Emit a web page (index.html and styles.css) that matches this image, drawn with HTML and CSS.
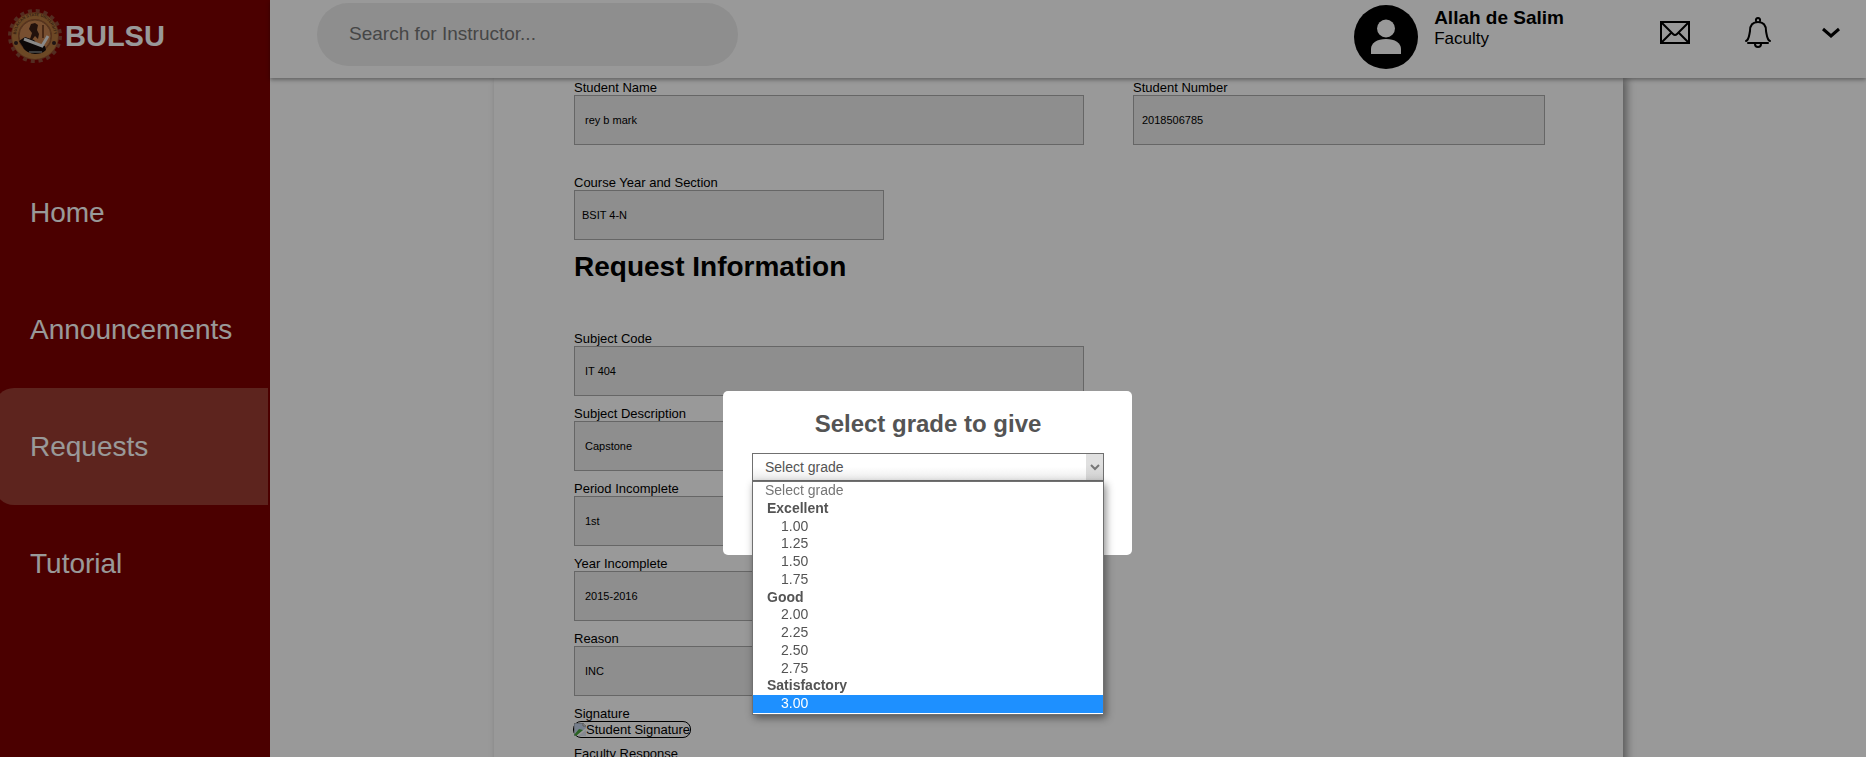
FILE: index.html
```html
<!DOCTYPE html>
<html lang="en">
<head>
<meta charset="utf-8">
<title>BULSU - Requests</title>
<link rel="stylesheet" href="styles.css">
</head>
<body>
<div class="app">
  <aside class="sidebar">
    <a class="brand" href="#">
      <svg class="brand-logo" viewBox="0 0 56 56" aria-hidden="true">
        <circle cx="28" cy="28" r="25" fill="none" stroke="#8a4a38" stroke-width="4" stroke-dasharray="4 3.854"/>
        <circle cx="28" cy="28" r="24" fill="#93502f"/>
        <circle cx="28" cy="28" r="20" fill="none" stroke="#b5793f" stroke-width="6"/>
        <path id="seal-arc" d="M10 33a19 19 0 1 1 36 0" fill="none"/>
        <text class="seal-text" text-anchor="middle"><textPath href="#seal-arc" startOffset="50%">BULACAN STATE UNIVERSITY</textPath></text>
        <circle cx="28" cy="28" r="16" fill="#c98450" stroke="#8a5a33"/>
        <path d="M24 16l4-1 3 2-1 5 2 4-1 5-3-3-3 4-2-1 2-6-3-4z" fill="#3a1d14"/>
        <path d="M36 17v13" stroke="#7a4526" stroke-width="2"/>
        <path d="M12 33l6-4 9 3 4 5 7 1 1 4c-3 3-7 4-11 4s-11-3-12-7z" fill="#140c0c"/>
        <path d="M22 44h13" stroke="#666" stroke-width="2"/>
        <path d="M17 31l18 7 6-10" fill="none" stroke="#e4e4e4" stroke-width="3"/>
        <circle cx="9" cy="35" r="2" fill="#332222"/><circle cx="47" cy="35" r="2" fill="#332222"/>
      </svg>
      <span>BULSU</span>
    </a>
    <nav class="nav">
      <a class="nav-link" href="#">Home</a>
      <a class="nav-link" href="#">Announcements</a>
      <a class="nav-link is-active" href="#" aria-current="page">Requests</a>
      <a class="nav-link" href="#">Tutorial</a>
    </nav>
  </aside>

  <div class="main">
    <header class="topbar">
      <input class="search" type="text" placeholder="Search for Instructor..." aria-label="Search for Instructor">
      <div class="user">
        <svg class="avatar" viewBox="0 0 64 64" aria-hidden="true">
          <circle cx="32" cy="32" r="32" fill="#000"/>
          <circle cx="32" cy="23.500" r="9" fill="#fff"/>
          <path d="M17 49v-5c0-6 6-10 15-10s15 4 15 10v5z" fill="#fff"/>
        </svg>
        <div class="user-text">
          <strong class="user-name">Allah de Salim</strong>
          <span class="user-role">Faculty</span>
        </div>
      </div>
      <div class="actions">
        <button class="icon-button" type="button" aria-label="Messages">
          <svg width="30" height="24" viewBox="0 0 30 24" fill="none" stroke="#000" stroke-width="2"><path d="M1 1h28v21H1zM1 1l12 12q2 2 4 0L29 1M1 22l10-10M29 22L19 12"/></svg>
        </button>
        <button class="icon-button" type="button" aria-label="Notifications">
          <svg width="28" height="32" viewBox="0 0 28 32" fill="none" stroke="#000" stroke-width="2" stroke-linecap="round"><path d="M2 24c3-1 3-5 4-10 0-6 3-9 8-9s8 3 8 9c1 5 1 9 4 10M4 26h20M11 27c0 4 6 4 6 0M12 4c-1-4 5-4 4 0"/></svg>
        </button>
        <button class="icon-button" type="button" aria-label="Account menu">
          <svg width="18" height="12" viewBox="0 0 18 12" fill="none" stroke="#000" stroke-width="3"><path d="M1 2l8 7 8-7"/></svg>
        </button>
      </div>
    </header>

    <main class="sheet">
      <form class="form">
        <div class="field-row">
          <div class="field field-wide">
            <label for="name">Student Name</label>
            <input id="name" type="text" value="rey b mark" readonly>
          </div>
          <div class="field field-number">
            <label for="number">Student Number</label>
            <input id="number" class="input-snug" type="text" value="2018506785" readonly>
          </div>
        </div>
        <div class="field field-course">
          <label for="course">Course Year and Section</label>
          <input id="course" class="input-tight" type="text" value="BSIT 4-N" readonly>
        </div>
        <h2 class="form-title">Request Information</h2>
        <div class="field-stack">
          <div class="field field-wide">
            <label for="code">Subject Code</label>
            <input id="code" type="text" value="IT 404" readonly>
          </div>
          <div class="field field-wide">
            <label for="description">Subject Description</label>
            <input id="description" type="text" value="Capstone" readonly>
          </div>
          <div class="field field-wide">
            <label for="period">Period Incomplete</label>
            <input id="period" type="text" value="1st" readonly>
          </div>
          <div class="field field-wide">
            <label for="year">Year Incomplete</label>
            <input id="year" type="text" value="2015-2016" readonly>
          </div>
          <div class="field field-wide">
            <label for="reason">Reason</label>
            <input id="reason" type="text" value="INC" readonly>
          </div>
          <div class="field">
            <span>Signature</span>
            <div class="signature">
              <svg width="12" height="14" viewBox="0 0 12 14" aria-hidden="true"><path d="M0 0h9l3 3v2L1 13H0z" fill="#c3d3ea"/><path d="M0 0h9l3 3M0 0v13" fill="none" stroke="#8b8b8b"/><path d="M0 12l5-6 4 1-7 6z" fill="#4aa53c"/><path d="M12 7v6H4z" fill="#dfe6f2"/><path d="M9 0v3h3" fill="#fff" stroke="#8b8b8b"/></svg>
              <span>Student Signature</span>
            </div>
            <span>Faculty Response</span>
          </div>
        </div>
      </form>
    </main>
  </div>
</div>

<div class="overlay">
  <section class="dialog" role="dialog" aria-modal="true" aria-labelledby="dialog-title">
    <h2 class="dialog-title" id="dialog-title">Select grade to give</h2>
    <div class="select">
      <select class="select-box" aria-label="Grade">
        <option>Select grade</option>
      </select>
      <span class="select-arrow">
        <svg width="10" height="7" viewBox="0 0 10 7" fill="none" stroke="#777" stroke-width="2"><path d="M1 1l4 4 4-4"/></svg>
      </span>
      <ul class="options" role="listbox" aria-label="Grades">
        <li class="option option-placeholder" role="option">Select grade</li>
        <li class="option option-group" role="presentation">Excellent</li>
        <li class="option option-grade" role="option">1.00</li>
        <li class="option option-grade" role="option">1.25</li>
        <li class="option option-grade" role="option">1.50</li>
        <li class="option option-grade" role="option">1.75</li>
        <li class="option option-group" role="presentation">Good</li>
        <li class="option option-grade" role="option">2.00</li>
        <li class="option option-grade" role="option">2.25</li>
        <li class="option option-grade" role="option">2.50</li>
        <li class="option option-grade" role="option">2.75</li>
        <li class="option option-group" role="presentation">Satisfactory</li>
        <li class="option option-grade is-selected" role="option" aria-selected="true">3.00</li>
      </ul>
    </div>
  </section>
</div>
</body>
</html>
```

FILE: styles.css
```css
* {
  box-sizing: border-box;
}

body {
  margin: 0;
  font-family: "Liberation Sans", Arial, sans-serif;
  color: #000;
  background: #fff;
}

.app {
  display: flex;
  height: 100vh;
  overflow: hidden;
}

/* Sidebar */
.sidebar {
  flex: none;
  width: 270px;
  background: #7d0000;
}

.brand {
  display: flex;
  align-items: center;
  gap: 2px;
  height: 72px;
  padding-left: 7px;
  color: #fff;
  font-size: 29px;
  font-weight: bold;
  text-decoration: none;
}

.brand-logo {
  width: 56px;
  height: 56px;
}

.seal-text {
  fill: #54301a;
  font-size: 4px;
}

.nav {
  display: flex;
  flex-direction: column;
  margin-top: 82px;
  margin-left: -6px;
  padding-right: 2px;
}

.nav-link {
  display: flex;
  align-items: center;
  height: 117px;
  padding-left: 36px;
  border-radius: 20px 0 0 20px;
  color: #fff;
  font-size: 28px;
  text-decoration: none;
}

.nav-link.is-active {
  background: #9b3c32;
}

/* Top bar */
.main {
  flex: 1;
  min-width: 0;
}

.topbar {
  position: relative;
  z-index: 1;
  display: flex;
  align-items: flex-start;
  height: 78px;
  padding: 3px 26px 0 47px;
  background: #fff;
  box-shadow: 0 2px 4px rgba(0, 0, 0, 0.35);
}

.search {
  width: 421px;
  height: 63px;
  padding: 0 32px 2px;
  border: 0;
  border-radius: 32px;
  background: #ededed;
  font: 19px "Liberation Sans", Arial, sans-serif;
}

.search::placeholder {
  color: #757575;
}

.user {
  display: flex;
  gap: 16px;
  margin-left: auto;
  padding-top: 2px;
}

.avatar {
  width: 64px;
  height: 64px;
}

.user-text {
  display: flex;
  flex-direction: column;
  padding-top: 2px;
}

.user-name {
  font-size: 19px;
  line-height: 22px;
}

.user-role {
  font-size: 17px;
  line-height: 20px;
}

.actions {
  display: grid;
  grid-template-columns: 84px 78px 18px;
  align-items: center;
  height: 60px;
  margin-left: 96px;
}

.icon-button {
  display: flex;
  padding: 0;
  border: 0;
  background: none;
}

/* Form sheet */
.sheet {
  width: 1129px;
  min-height: 100%;
  margin-left: 224px;
  padding: 2px 78px 0 80px;
  background: #fff;
  box-shadow: 4px 0 8px rgba(0, 0, 0, 0.4);
}

.form {
  font-size: 13px;
  line-height: 15px;
}

.field-row {
  display: flex;
  justify-content: space-between;
  margin-bottom: 30px;
}

.field {
  display: flex;
  flex-direction: column;
  align-items: flex-start;
}

.field-wide {
  width: 510px;
}

.field-number {
  width: 412px;
}

.field-course {
  width: 310px;
}

.field input {
  width: 100%;
  height: 50px;
  padding: 0 10px;
  border: 1px solid #aaa;
  background: #ededed;
  color: #000;
  font: 11px "Liberation Sans", Arial, sans-serif;
}

.field .input-snug {
  padding: 0 8px;
}

.field .input-tight {
  padding: 0 7px;
}

.form-title {
  margin: 11px 0 48px;
  font-size: 28px;
  line-height: 32px;
}

.field-stack {
  display: flex;
  flex-direction: column;
  gap: 10px;
}

.signature {
  display: flex;
  align-items: center;
  margin: 0 0 8px -1px;
  border: 1px solid #000;
  border-radius: 8px;
}

/* Grade dialog */
.overlay {
  position: fixed;
  inset: 0;
  z-index: 10;
  display: flex;
  align-items: flex-start;
  justify-content: center;
  padding: 391px 11px 0 0;
  background: rgba(0, 0, 0, 0.4);
}

.dialog {
  width: 409px;
  height: 164px;
  padding: 19px 28px 0 29px;
  border-radius: 5px;
  background: #fff;
  color: #545454;
}

.dialog-title {
  margin: 0 0 15px;
  font-size: 24px;
  line-height: 28px;
  text-align: center;
}

.select {
  position: relative;
}

.select-box {
  display: block;
  width: 100%;
  height: 28px;
  padding: 0 12px;
  border: 1px solid #707070;
  border-radius: 0;
  appearance: none;
  background: linear-gradient(#fff 50%, #ececec);
  color: #545454;
  font: 14px "Liberation Sans", Arial, sans-serif;
}

.select-arrow {
  position: absolute;
  top: 1px;
  right: 1px;
  display: flex;
  align-items: center;
  justify-content: center;
  width: 17px;
  height: 26px;
  background: linear-gradient(#e0e0e0 40%, #d0d0d0);
  pointer-events: none;
}

.options {
  position: absolute;
  top: 28px;
  left: 0;
  right: 0;
  display: flex;
  flex-direction: column;
  height: 234px;
  margin: 0;
  padding: 0 0 1px;
  border: 1px solid #707070;
  background: #fff;
  box-shadow: 2px 3px 8px rgba(0, 0, 0, 0.45);
  list-style: none;
  font-size: 14px;
  line-height: 17px;
}

.option {
  flex: 1;
}

.option-placeholder {
  padding-left: 12px;
  color: #767676;
}

.option-group {
  padding-left: 14px;
  font-weight: bold;
}

.option-grade {
  padding-left: 28px;
}

.option.is-selected {
  background: #1e90ff;
  color: #fff;
}
```
